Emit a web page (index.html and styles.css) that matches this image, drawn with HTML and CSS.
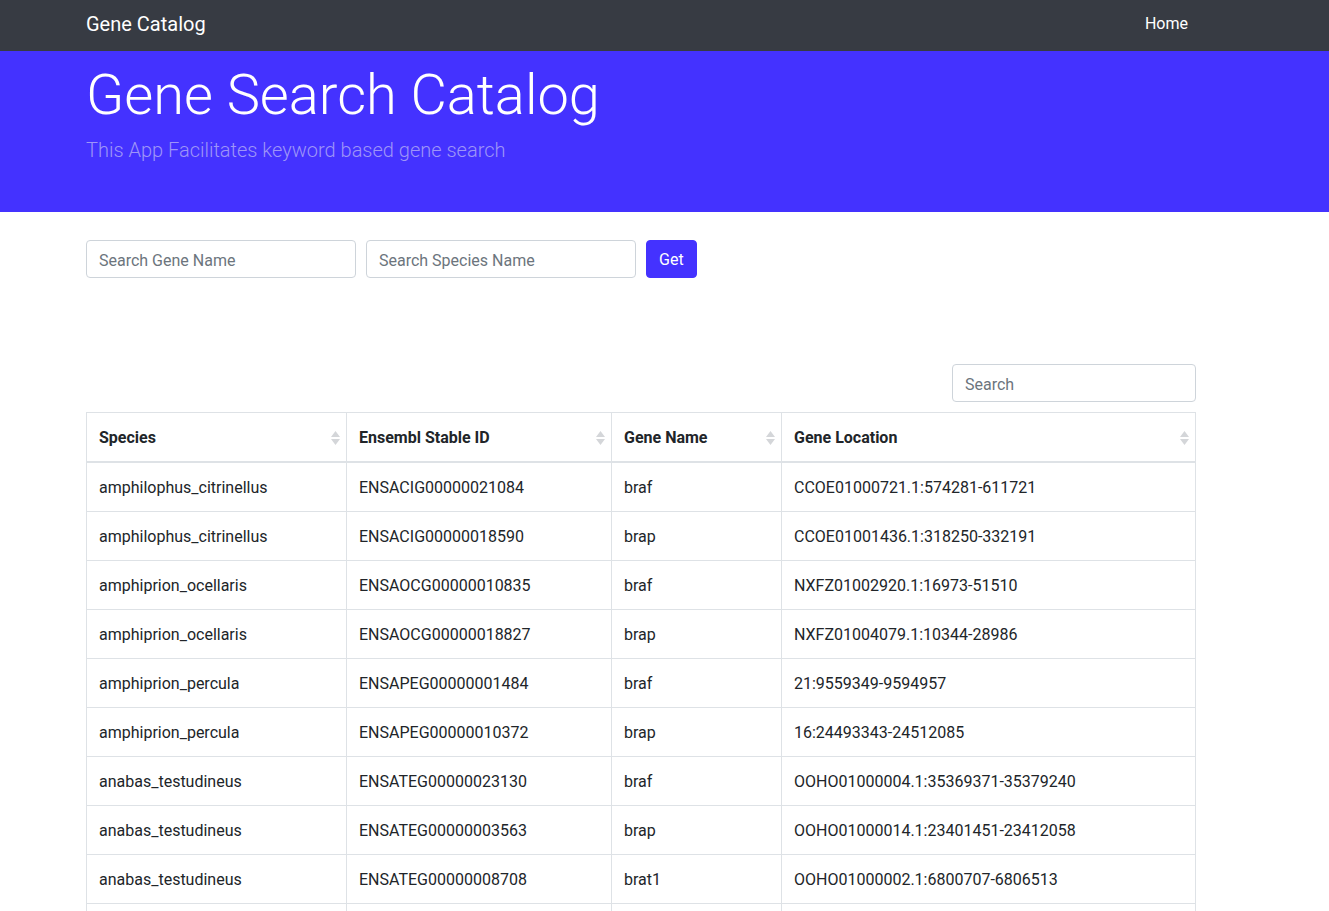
FILE: index.html
```html
<!DOCTYPE html>
<html lang="en">
<head>
<meta charset="utf-8">
<title>Gene Catalog</title>
<link rel="stylesheet" href="styles.css">
</head>
<body>
<nav class="navbar">
  <div class="container nav-inner">
    <a class="brand" href="#">Gene Catalog</a>
    <a class="nav-link" href="#">Home</a>
  </div>
</nav>
<header class="jumbotron">
  <div class="container">
    <h1 class="display">Gene Search Catalog</h1>
    <p class="lead">This App Facilitates keyword based gene search</p>
  </div>
</header>
<main class="container">
  <form class="search-form">
    <input class="form-control field" type="text" placeholder="Search Gene Name">
    <input class="form-control field" type="text" placeholder="Search Species Name">
    <button class="btn" type="button">Get</button>
  </form>
  <div class="dt-filter">
    <input class="form-control filter" type="search" placeholder="Search">
  </div>
  <table class="table">
    <colgroup>
      <col class="c1"><col class="c2"><col class="c3"><col class="c4">
    </colgroup>
    <thead>
      <tr>
        <th>Species<svg class="sort" viewBox="0 0 9 14" width="9" height="14"><path d="M4.5 0 L9 6 H0 Z"/><path d="M4.5 14 L9 8 H0 Z"/></svg></th>
        <th>Ensembl Stable ID<svg class="sort" viewBox="0 0 9 14" width="9" height="14"><path d="M4.5 0 L9 6 H0 Z"/><path d="M4.5 14 L9 8 H0 Z"/></svg></th>
        <th>Gene Name<svg class="sort" viewBox="0 0 9 14" width="9" height="14"><path d="M4.5 0 L9 6 H0 Z"/><path d="M4.5 14 L9 8 H0 Z"/></svg></th>
        <th>Gene Location<svg class="sort" viewBox="0 0 9 14" width="9" height="14"><path d="M4.5 0 L9 6 H0 Z"/><path d="M4.5 14 L9 8 H0 Z"/></svg></th>
      </tr>
    </thead>
    <tbody>
      <tr><td>amphilophus_citrinellus</td><td>ENSACIG00000021084</td><td>braf</td><td>CCOE01000721.1:574281-611721</td></tr>
      <tr><td>amphilophus_citrinellus</td><td>ENSACIG00000018590</td><td>brap</td><td>CCOE01001436.1:318250-332191</td></tr>
      <tr><td>amphiprion_ocellaris</td><td>ENSAOCG00000010835</td><td>braf</td><td>NXFZ01002920.1:16973-51510</td></tr>
      <tr><td>amphiprion_ocellaris</td><td>ENSAOCG00000018827</td><td>brap</td><td>NXFZ01004079.1:10344-28986</td></tr>
      <tr><td>amphiprion_percula</td><td>ENSAPEG00000001484</td><td>braf</td><td>21:9559349-9594957</td></tr>
      <tr><td>amphiprion_percula</td><td>ENSAPEG00000010372</td><td>brap</td><td>16:24493343-24512085</td></tr>
      <tr><td>anabas_testudineus</td><td>ENSATEG00000023130</td><td>braf</td><td>OOHO01000004.1:35369371-35379240</td></tr>
      <tr><td>anabas_testudineus</td><td>ENSATEG00000003563</td><td>brap</td><td>OOHO01000014.1:23401451-23412058</td></tr>
      <tr><td>anabas_testudineus</td><td>ENSATEG00000008708</td><td>brat1</td><td>OOHO01000002.1:6800707-6806513</td></tr>
      <tr class="empty-row"><td></td><td></td><td></td><td></td></tr>
    </tbody>
  </table>
</main>
</body>
</html>
```
FILE: styles.css
```css
* { box-sizing: border-box; }
html, body { margin: 0; padding: 0; }
body {
  font-family: Roboto, "Liberation Sans", Arial, sans-serif;
  font-size: 16px;
  line-height: 1.5;
  color: #212529;
  background: #fff;
}
.container {
  width: 1140px;
  margin-left: 71px;
  padding: 0 15px;
}
.navbar {
  background: #373b43;
  height: 51px;
}
.nav-inner {
  height: 51px;
  display: flex;
  align-items: center;
  justify-content: space-between;
}
.brand {
  color: #fff;
  font-size: 20px;
  text-decoration: none;
  line-height: 30px;
  margin-top: -3px;
}
.nav-link {
  color: #fff;
  text-decoration: none;
  padding: 0 8px;
  line-height: 24px;
  margin-top: -3px;
}
.jumbotron {
  background: #4432ff;
  padding: 11px 0 47px;
}
.display {
  margin: 0 0 6px;
  font-size: 56px;
  font-weight: 300;
  line-height: 1.2;
  color: #fff;
}
.lead {
  margin: 0;
  font-size: 20px;
  font-weight: 300;
  color: #9e95f8;
  line-height: 1.5;
}
.search-form {
  display: flex;
  gap: 10px;
  margin-top: 28px;
}
.form-control {
  height: 38px;
  padding: 7px 12px 5px;
  font-family: inherit;
  font-size: 16px;
  color: #495057;
  border: 1px solid #ced4da;
  border-radius: 4px;
  background: #fff;
}
.form-control::placeholder { color: #6c757d; }
.field { width: 270px; }
.btn {
  height: 38px;
  padding: 6px 12px;
  font-family: inherit;
  font-size: 16px;
  color: #fff;
  background: #4432ff;
  border: 1px solid #4432ff;
  border-radius: 4px;
}
.dt-filter {
  display: flex;
  justify-content: flex-end;
  margin-top: 86px;
}
.filter { width: 244px; }
.table {
  width: 1109px;
  margin-top: 10px;
  border-collapse: collapse;
  table-layout: fixed;
  border: 1px solid #dee2e6;
}
.c1 { width: 260px; }
.c2 { width: 265px; }
.c3 { width: 170px; }
.c4 { width: 414px; }
.table th, .table td {
  border: 1px solid #dee2e6;
  padding: 13px 12px 11px;
  text-align: left;
  vertical-align: top;
  line-height: 24px;
}
.empty-row td { height: 49px; }
.table th {
  position: relative;
  font-weight: 700;
  border-bottom-width: 2px;
}
.sort {
  position: absolute;
  right: 6px;
  top: 18px;
  fill: #d4d6d9;
}
```
